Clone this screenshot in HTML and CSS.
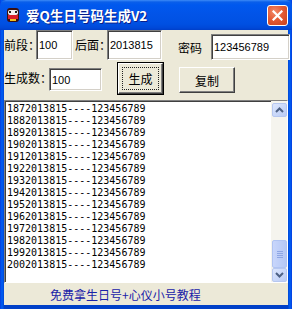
FILE: index.html
```html
<!DOCTYPE html>
<html>
<head>
<meta charset="utf-8">
<title>爱Q生日号码生成V2</title>
<link rel="stylesheet" href="styles.css">
</head>
<body>

  <div class="window">
    <div class="titlebar">
      <svg class="app-icon" width="14" height="16" viewBox="0 0 14 16">
        <rect x="1" y="1" width="12" height="14" rx="3" fill="#3a1010"/>
        <rect x="2" y="3" width="10" height="5" rx="2" fill="#f4f0f0"/>
        <rect x="3" y="4" width="2" height="2" fill="#222"/>
        <rect x="9" y="4" width="2" height="2" fill="#222"/>
        <rect x="2" y="8" width="10" height="4" fill="#d8202a"/>
        <rect x="4" y="12" width="6" height="2" fill="#f0c020"/>
      </svg>
      <span class="title">爱Q生日号码生成V2</span>
      <div class="close-btn">
        <svg width="11" height="11" viewBox="0 0 11 11">
          <path d="M1.5 1.5 L9.5 9.5 M9.5 1.5 L1.5 9.5" stroke="#fff" stroke-width="2.2" stroke-linecap="square"/>
        </svg>
      </div>
    </div>

    <div class="client">
      <div class="row row-top">
        <span class="lbl lbl-prefix">前段：</span>
        <div class="field field-prefix">100</div>
        <span class="lbl lbl-suffix">后面：</span>
        <div class="field field-suffix">2013815</div>
        <span class="lbl lbl-pass">密码</span>
        <div class="field field-pass">123456789</div>
      </div>

      <div class="row row-actions">
        <span class="lbl lbl-count">生成数：</span>
        <div class="field field-count">100</div>
        <div class="btn btn-default"><span class="focus">生成</span></div>
        <div class="btn btn-copy">复制</div>
      </div>

      <div class="output">
        <div class="lines">
          <div>1872013815----123456789</div>
          <div>1882013815----123456789</div>
          <div>1892013815----123456789</div>
          <div>1902013815----123456789</div>
          <div>1912013815----123456789</div>
          <div>1922013815----123456789</div>
          <div>1932013815----123456789</div>
          <div>1942013815----123456789</div>
          <div>1952013815----123456789</div>
          <div>1962013815----123456789</div>
          <div>1972013815----123456789</div>
          <div>1982013815----123456789</div>
          <div>1992013815----123456789</div>
          <div>2002013815----123456789</div>
        </div>
        <div class="scrollbar">
          <div class="sb-btn">
            <svg width="9" height="6" viewBox="0 0 9 6"><path d="M1 5 L4.5 1.5 L8 5" fill="none" stroke="#4d6185" stroke-width="2"/></svg>
          </div>
          <div class="sb-track">
            <div class="sb-thumb">
              <span></span><span></span><span></span><span></span>
            </div>
          </div>
          <div class="sb-btn">
            <svg width="9" height="6" viewBox="0 0 9 6"><path d="M1 1 L4.5 4.5 L8 1" fill="none" stroke="#4d6185" stroke-width="2"/></svg>
          </div>
        </div>
      </div>

      <div class="status">免费拿生日号+心仪小号教程</div>
    </div>
  </div>

</body>
</html>
```

FILE: styles.css
```css
  body {
    margin: 0;
    background: #fff;
  }

  .window {
    width: 292px;
    height: 309px;
    display: flex;
    flex-direction: column;
    background: linear-gradient(to right, #0831d9 0, #0058ee 1px, #0058ee 3px, #0040c8 4px, #0040c8 288px, #0058ee 289px, #0058ee 291px, #0831d9 292px);
    overflow: hidden;
  }

  .titlebar {
    height: 30px;
    display: flex;
    align-items: center;
    padding: 0 4px 0 5px;
    background: linear-gradient(to bottom, #3d8bf7 0, #0a5fea 2px, #0058ee 5px, #0254e8 14px, #0050e2 24px, #0048d8 28px, #003fc8 30px);
    border-radius: 6px 6px 0 0;
  }

  .app-icon {
    margin-left: 1px;
  }

  .title {
    margin-left: 6px;
    font-family: "Noto Sans CJK SC", sans-serif;
    font-size: 13.5px;
    font-weight: bold;
    color: #fff;
    text-shadow: 1px 1px 0 #0a1e8a;
    flex: 1;
  }

  .close-btn {
    width: 21px;
    height: 21px;
    box-sizing: border-box;
    border: 1px solid #fff;
    border-radius: 3px;
    background: radial-gradient(circle at 35% 30%, #f28a6a 0, #e45b35 45%, #c8401c 100%);
    display: flex;
    align-items: center;
    justify-content: center;
  }

  .client {
    margin: 0 4px 4px;
    height: 275px;
    background: #ece9d8;
    display: flex;
    flex-direction: column;
  }

  .row {
    display: flex;
    align-items: flex-start;
  }

  .row-top {
    height: 33px;
  }

  .row-actions {
    height: 37px;
  }

  .lbl {
    font-family: "Noto Sans CJK SC", sans-serif;
    font-size: 12px;
    line-height: 30px;
    color: #000;
    white-space: nowrap;
  }

  .lbl-prefix { width: 32px; }
  .lbl-suffix { width: 32px; margin-left: 2px; }
  .lbl-pass { width: 24px; margin-left: 16px; margin-top: 3px; }
  .lbl-count { width: 44px; margin-top: 0; }

  .field {
    box-sizing: border-box;
    background: #fff;
    border: 1px solid;
    border-color: #808080 #ffffff #ffffff #808080;
    box-shadow: inset 1px 1px 0 #404040, inset -1px -1px 0 #d4d0c8;
    font-family: "Liberation Sans", Arial, sans-serif;
    font-size: 11px;
    color: #000;
    display: flex;
    align-items: center;
    padding-left: 2px;
    overflow: hidden;
    white-space: nowrap;
  }

  .field-prefix { width: 37px; height: 30px; }
  .field-suffix { width: 55px; height: 30px; }
  .field-pass { flex: 1; height: 26px; margin-left: 9px; margin-top: 4px; margin-right: -2px; }
  .field-count { width: 53px; height: 23px; margin-left: 1px; margin-top: 5px; }

  .btn {
    box-sizing: border-box;
    display: flex;
    align-items: center;
    justify-content: center;
    background: #ece9d8;
    border: 1px solid;
    border-color: #ffffff #404040 #404040 #ffffff;
    box-shadow: inset -1px -1px 0 #808080;
    font-family: "Noto Sans CJK SC", sans-serif;
    font-size: 12px;
    color: #000;
  }

  .btn-default {
    width: 45px;
    height: 31px;
    margin-left: 16px;
    outline: 1px solid #000;
    outline-offset: 0;
  }

  .btn-default .focus {
    box-sizing: border-box;
    width: 37px;
    height: 23px;
    border: 1px dotted #222;
    display: flex;
    align-items: center;
    justify-content: center;
  }

  .btn-copy {
    width: 56px;
    height: 26px;
    margin-left: 16px;
    margin-top: 4px;
  }

  .output {
    height: 183px;
    box-sizing: border-box;
    display: flex;
    background: #fff;
    border: 1px solid;
    border-color: #808080 #ffffff #ffffff #808080;
    box-shadow: inset 1px 1px 0 #404040;
  }

  .lines {
    flex: 1;
    padding: 2px 0 0 2px;
    font-family: "DejaVu Sans Mono", monospace;
    font-size: 10px;
    line-height: 12px;
    color: #000;
    overflow: hidden;
  }

  .scrollbar {
    width: 16px;
    display: flex;
    flex-direction: column;
    background: #f5f4ee;
    padding: 2px 0 0 1px;
    box-sizing: border-box;
  }

  .sb-btn {
    height: 14px;
    box-sizing: border-box;
    border: 1px solid #b6c7f0;
    border-radius: 2px;
    background: linear-gradient(to bottom right, #dce6fd, #b9cbf5);
    display: flex;
    align-items: center;
    justify-content: center;
  }

  .sb-track {
    flex: 1;
    display: flex;
    flex-direction: column;
    justify-content: flex-end;
  }

  .sb-thumb {
    height: 28px;
    box-sizing: border-box;
    border: 1px solid #b0c4f2;
    border-radius: 2px;
    background: linear-gradient(to right, #c8d6fb, #b5c8f5);
    display: flex;
    flex-direction: column;
    align-items: center;
    justify-content: center;
    gap: 1px;
  }

  .sb-thumb span {
    width: 6px;
    height: 1px;
    background: #8ea6e4;
  }

  .status {
    height: 22px;
    padding: 2px 0 0 46px;
    box-sizing: border-box;
    font-family: "Noto Sans CJK SC", sans-serif;
    font-size: 12px;
    line-height: 20px;
    color: #1a22a8;
  }
```
